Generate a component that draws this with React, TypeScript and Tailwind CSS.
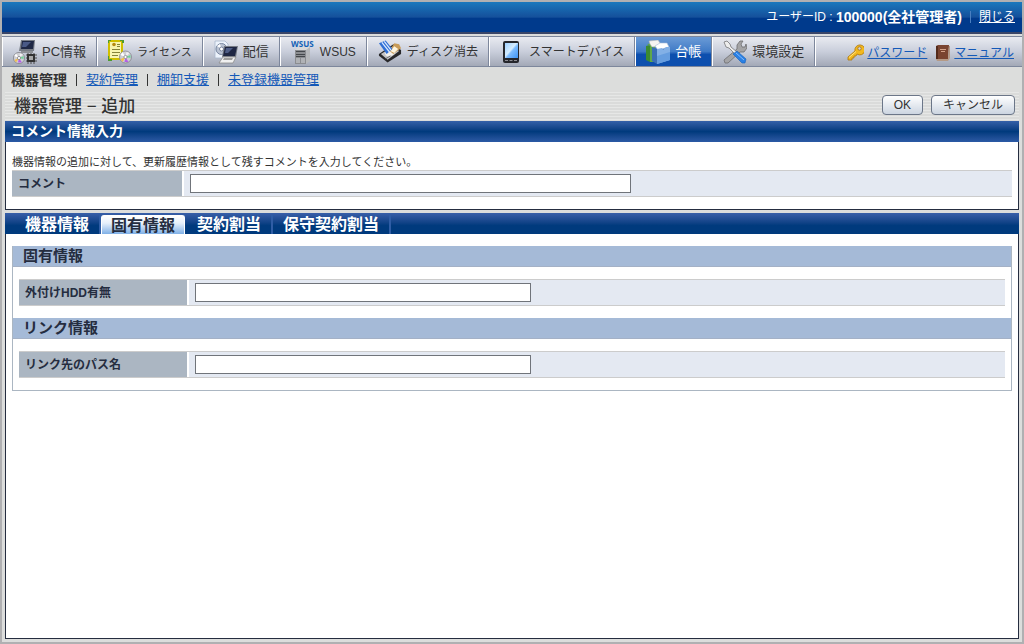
import { FC, ReactNode } from 'react'

const Disc: FC<{ x: number; y: number; r: number }> = ({ x, y, r }) => (
	<g>
		<circle cx={x} cy={y} r={r} fill="#cfcfd4" stroke="#85858c" strokeWidth="0.8" />
		<path d={`M${x} ${y}L${x - r + 1} ${y - 2}L${x - 3} ${y - r + 1}z`} fill="#fff" />
		<path d={`M${x} ${y}L${x + 1} ${y - r + 1}L${x + 4} ${y - r + 2}z`} fill="#f2f2f4" />
		<path d={`M${x} ${y}L${x - 3} ${y + r - 1}L${x - r + 1} ${y + 2}z`} fill="#f4bd50" />
		<path d={`M${x} ${y}L${x + 3} ${y + r - 1}L${x - 1} ${y + r - 1}z`} fill="#b25fe6" />
		<path d={`M${x} ${y}L${x + r - 1} ${y - 2}L${x + r - 1} ${y + 1}z`} fill="#6fd49a" />
		<circle cx={x} cy={y} r="1.6" fill="#fff" stroke="#777" strokeWidth="0.7" />
	</g>
)

const PcIcon = () => (
	<svg width="24" height="24" viewBox="0 0 24 24">
		<path d="M8 0h14l-1 11H6z" fill="#777c85" />
		<path d="M9 1h12l-1 8H8z" fill="#1f2845" />
		<path d="M10 2h8l-5 5H9z" fill="#4a5a86" />
		<path d="M8 11h12v2H8z" fill="#8d9095" />
		<Disc x={6} y={18} r={5.6} />
		<path d="M13 15h11M13 18h11M13 21h11M15 13v11M18 13v11M21 13v11" stroke="#4a4a4a" />
		<path d="M14 14h8v8h-8z" fill="#333" />
		<path d="M16 16h4v4h-4z" fill="#a9a9a9" />
	</svg>
)

const LicenseIcon = () => (
	<svg width="24" height="24" viewBox="0 0 24 24">
		<rect x="1" y="1" width="13" height="18" fill="#f8f5b0" stroke="#d0bf00" strokeWidth="2" />
		<path d="M0 3V0h3M12 0h3v3M0 16v4h4" stroke="#4e9b30" strokeWidth="2" fill="none" />
		<circle cx="6" cy="4.5" r="1.8" fill="#b58a12" />
		<path d="M9 4.5h3M9 6.5h3M4 9.5h8M4 12.5h8M4 15.5h6" stroke="#84823a" />
		<Disc x={17.5} y={17} r={6} />
	</svg>
)

const DeliveryIcon = () => (
	<svg width="24" height="24" viewBox="0 0 24 24">
		<path d="M1 1h10l3 3v14H1z" fill="#edf3fc" stroke="#a8b6cc" strokeWidth="0.8" />
		<circle cx="7.5" cy="9" r="5.5" fill="#b9c2d2" stroke="#7886a0" />
		<path d="M7.500 9L3 6l3-2z" fill="#fff" />
		<circle cx="7.500" cy="9" r="2" fill="#fff" stroke="#7a86a0" />
		<path d="M10 6h14l-2 11H8z" fill="#777c86" />
		<path d="M11 7h12l-2 9H9z" fill="#1f2744" />
		<path d="M12 8h7l-5 5h-3z" fill="#4e5d86" />
		<path d="M9 17h13l-3 6H5z" fill="#f0f0f0" stroke="#8c8c8c" strokeWidth="0.8" />
		<path d="M10 18h9l-1 2H9z" fill="#9d9d9d" />
	</svg>
)

const WsusIcon = () => (
	<svg width="24" height="26" viewBox="0 0 24 26">
		<path d="M4 11l4-3h11l-3 3z" fill="#dadada" />
		<path d="M4 11h11v14H4z" fill="#8b8d90" />
		<path d="M15 11l4-3v14l-4 3z" fill="#b7b9bb" />
		<path d="M5 12.500h9M5 15.500h9M5 17.500h9" stroke="#45484b" />
		<path d="M5 19h4v5H5zM10 19h4v5h-4z" fill="#b0b2b5" />
		<text x="0" y="8" fontSize="9" fontWeight="700" fill="#1261b5" fontFamily="Open Sans, sans-serif">
			<tspan fontSize="8">WSUS</tspan>
		</text>
	</svg>
)

const EraseIcon = () => (
	<svg width="25" height="24" viewBox="0 0 25 24">
		<path d="M1 14L16 4l8 6v4L10 23l-9-7z" fill="#28282a" />
		<path d="M3 14L16 6l6 5L10 20z" fill="#c4c4c6" />
		<ellipse cx="13" cy="12" rx="6" ry="4" fill="#f2f0ec" transform="rotate(-30 13 12)" />
		<path d="M17 3l5 1 2 4-8 6-4-3z" fill="#c89b58" />
		<path d="M13 11l4-5 4 3-4 4z" fill="#fdf4dd" />
		<path d="M1 3l7-3 7 9-6 5z" fill="#2f6fd4" />
		<path d="M4 2l8 10M6.500 1l7 9" stroke="#d9e8ff" strokeWidth="1.3" />
		<path d="M8 19l5-3" stroke="#666" />
	</svg>
)

const PhoneIcon = () => (
	<svg width="24" height="24" viewBox="0 0 24 24">
		<defs>
			<linearGradient id="screen" x1="0" y1="0" x2="1" y2="1">
				<stop offset="0" stopColor="#9fd0ff" />
				<stop offset="0.45" stopColor="#d5edff" />
				<stop offset="0.55" stopColor="#7dbcff" />
				<stop offset="1" stopColor="#3d93f5" />
			</linearGradient>
		</defs>
		<rect x="3" y="1" width="16" height="22" rx="2" fill="#25262b" />
		<rect x="5" y="3" width="13" height="15" fill="url(#screen)" />
		<path d="M5 20.500h3M9.500 20.500h3M14 20.500h3" stroke="#8d8d92" />
	</svg>
)

const LedgerIcon = () => (
	<svg width="24" height="24" viewBox="0 0 24 24">
		<path d="M0 6l4-1v17l-4-2z" fill="#3b8a31" />
		<path d="M1 4l8-1v19l-5 0V6z" fill="#5fa84a" />
		<path d="M3 1l9-1 2 3 1 3-9 1-2-3z" fill="#f6f4f1" stroke="#b5b5b5" strokeWidth="0.6" />
		<path d="M6 7l5 2v15l-5-3z" fill="#3b6fb6" />
		<path d="M9 6l5-3h7l2 4-11 3z" fill="#fff" stroke="#a9bcd8" strokeWidth="0.6" />
		<path d="M11 9l5-1 1 2 3-3 4 0v13l-13 4z" fill="#83b0e6" />
		<path d="M11 16l13-4v8l-13 4z" fill="#669ddf" />
	</svg>
)

const ToolsIcon = () => (
	<svg width="24" height="24" viewBox="0 0 24 24">
		<path
			d="M1 20L14 9l0-4 3-4h3l-2 3 1 3 3 0 1-3 1 4-3 4h-4L5 23H2z"
			fill="#a4a4a6"
			stroke="#6d6d70"
			strokeWidth="0.8"
		/>
		<path d="M1 2l3-1 3 3 1 3 6 5-2 2-6-6-3-1z" fill="#ededed" stroke="#77777a" strokeWidth="0.8" />
		<path d="M10 14l4-3 9 8-1 4h-3z" fill="#2a80e4" stroke="#1660b8" strokeWidth="0.6" />
		<path d="M13 13l8 7" stroke="#84bcff" />
	</svg>
)

const KeyIcon = () => (
	<svg width="17" height="17" viewBox="0 0 17 17">
		<path d="M8 7L1 13v3h4v-2h2v-2h2l1-2a5 5 0 1 0-2-3z" fill="#f2b81f" stroke="#ad770c" strokeWidth="0.8" />
		<path d="M2 13.500l7-6" stroke="#ffe688" />
		<circle cx="12.500" cy="4.500" r="1.700" fill="#d7d7da" stroke="#a06c10" strokeWidth="0.8" />
	</svg>
)

const BookIcon = () => (
	<svg width="14" height="16" viewBox="0 0 14 16">
		<path d="M0 1l2-1h11l-1 14H0z" fill="#7a4430" />
		<path d="M13 1h1v12l-2 3H1l-1-2h12z" fill="#b59a86" />
		<path d="M0 1h2v13H0z" fill="#532a1b" />
		<path d="M4 4.500h6M5 6.500h4" stroke="#d4a288" />
	</svg>
)

interface MenuItem {
	label: string
	icon: ReactNode
	size: string
	active?: boolean
}

const menu: MenuItem[] = [
	{ label: 'PC情報', icon: <PcIcon />, size: 'text-[13px]' },
	{ label: 'ライセンス', icon: <LicenseIcon />, size: 'text-[11px]' },
	{ label: '配信', icon: <DeliveryIcon />, size: 'text-[13px]' },
	{ label: 'WSUS', icon: <WsusIcon />, size: 'text-xs' },
	{ label: 'ディスク消去', icon: <EraseIcon />, size: 'text-xs' },
	{ label: 'スマートデバイス', icon: <PhoneIcon />, size: 'text-xs' },
	{ label: '台帳', icon: <LedgerIcon />, size: 'text-[13px]', active: true },
	{ label: '環境設定', icon: <ToolsIcon />, size: 'text-[13px]' },
]

const tabs = ['機器情報', '固有情報', '契約割当', '保守契約割当']

const Header = () => (
	<header className="flex h-8 items-center justify-end border-b-2 border-[#3a4668] bg-linear-to-b from-[#1a78bd] via-[#15509b] via-50% to-[#003a8c] to-55% pr-[7px] text-xs text-white">
		<span>ユーザーID :&nbsp;</span>
		<b className="text-sm">100000(全社管理者)</b>
		<span className="mx-2 h-3 w-px bg-[#4a7fc0]" />
		<a href="#close" className="underline">
			閉じる
		</a>
	</header>
)

const MainMenu = () => (
	<nav className="mt-0.5 flex h-[31px] items-stretch border-y border-[#7d879c] bg-linear-to-b from-[#e9ebf1] via-[#c9cedb] via-50% to-[#a3a9b7]">
		{menu.map(({ label, icon, size, active }) => (
			<a
				key={label}
				href="#menu"
				className={`flex items-center gap-[5px] border-r border-l border-l-white border-r-[#7d879c] px-[10px] pt-px whitespace-nowrap ${size} ${
					active
						? 'bg-linear-to-b from-[#6b9bd6] via-[#3f7ac6] via-50% to-[#0d4fae] to-60% text-white'
						: 'text-[#333]'
				}`}
			>
				<span className="flex w-6 shrink-0 justify-center">{icon}</span>
				{label}
			</a>
		))}
		<div className="flex flex-1 items-center justify-end gap-[3px] border-l border-white pt-0.5 pr-2 text-xs text-[#1459b8]">
			<KeyIcon />
			<a href="#password" className="mr-1.5 underline">
				パスワード
			</a>
			<BookIcon />
			<a href="#manual" className="ml-px underline">
				マニュアル
			</a>
		</div>
	</nav>
)

const SubMenu = () => (
	<nav className="flex h-[25px] items-center gap-[9px] pl-[9px] text-[13px] text-[#333]">
		<b className="text-sm">機器管理</b>
		{['契約管理', '棚卸支援', '未登録機器管理'].map((label) => (
			<span key={label} className="flex items-center gap-[9px]">
				<span className="h-3 w-px bg-[#333]" />
				<a href="#sub" className="text-[#1459b8] underline">
					{label}
				</a>
			</span>
		))}
	</nav>
)

const buttonClass =
	'h-5 rounded-[4px] border border-[#6b7688] bg-linear-to-b from-white to-[#ccd5e1] px-[11px] text-xs leading-none text-[#333]'

const Field: FC<{ id: string; label: string; wide?: boolean }> = ({ id, label, wide }) => (
	<div className="flex items-stretch border-y border-[#ccc] bg-[#e4e9f2]">
		<label
			htmlFor={id}
			className={`flex shrink-0 items-center border-r-2 border-white bg-[#abb6c2] pl-1.5 text-xs font-bold text-[#252d40] ${
				wide ? 'w-[172px]' : 'w-[170px]'
			}`}
		>
			{label}
		</label>
		<div className="min-w-0 flex-1 px-1.5 py-[3px]">
			<input
				id={id}
				type="text"
				className={`block h-[19px] max-w-full border border-[#70747a] bg-white px-1 text-xs outline-none ${
					wide ? 'w-[441px]' : 'w-[336px]'
				}`}
			/>
		</div>
	</div>
)

const Group: FC<{ title: string; children: ReactNode }> = ({ title, children }) => (
	<section>
		<h3 className="h-[21px] border-b border-[#a4b1c6] bg-[#a5bad7] pl-[10px] text-[15px] leading-5 font-bold text-[#252d40]">
			{title}
		</h3>
		<div className="px-1.5 py-3">{children}</div>
	</section>
)

const App: FC = () => (
	<div className="flex min-h-screen flex-col border-2 border-[#b0b0b2] bg-[#dcdddc] font-['Liberation_Sans','Noto_Sans_CJK_JP',sans-serif]">
		<Header />
		<MainMenu />
		<SubMenu />
		<main className="flex flex-1 flex-col px-[3px] pb-[3px]">
			<div className="flex h-[29px] items-center gap-2 bg-[repeating-linear-gradient(to_bottom,#e6e7e6_0px,#e6e7e6_1px,#dadbda_1px,#dadbda_3px)] pr-1 pb-1 pl-[9px] text-[#333]">
				<h1 className="flex-1 pt-1 text-[17px] leading-6 font-medium">機器管理 − 追加</h1>
				<button type="button" className={buttonClass}>
					OK
				</button>
				<button type="button" className={buttonClass}>
					キャンセル
				</button>
			</div>
			<section className="border border-t-0 border-[#252d40] bg-white">
				<h2 className="-mx-px h-[21px] bg-linear-to-b from-[#3460a8] via-[#003a7d] via-50% to-[#2c5aa5] pl-1.5 text-sm leading-[21px] font-bold text-white">
					コメント情報入力
				</h2>
				<div className="px-1.5 py-3">
					<p className="h-4 text-[11px] leading-4 text-[#333]">
						機器情報の追加に対して、更新履歴情報として残すコメントを入力してください。
					</p>
					<Field id="comment" label="コメント" wide />
				</div>
			</section>
			<section className="mt-[3px] flex flex-1 flex-col border border-t-0 border-[#252d40] bg-white">
				<div
					role="tablist"
					className="-mx-px flex h-[21px] items-end bg-linear-to-b from-[#385fa9] to-[#003a7d] to-60% pl-2.5 text-base"
				>
					{tabs.map((tab) => (
						<button
							key={tab}
							type="button"
							role="tab"
							aria-selected={tab === '固有情報'}
							className={`h-[19px] leading-[17px] font-bold ${
								tab === '固有情報'
									? 'mr-0.5 rounded-t-[3px] border-x border-t border-white bg-linear-to-b from-white via-[#e6f0fb] via-40% to-[#7fb0e6] px-[9px] text-[#252d40]'
									: 'border-r-2 border-[#2f5da5] px-[10px] text-white'
							}`}
						>
							{tab}
						</button>
					))}
				</div>
				<div className="mx-1.5 my-3 border border-t-0 border-[#abb6c2]">
					<Group title="固有情報">
						<Field id="hdd" label="外付けHDD有無" />
					</Group>
					<Group title="リンク情報">
						<Field id="link" label="リンク先のパス名" />
					</Group>
				</div>
			</section>
		</main>
	</div>
)

export default App
